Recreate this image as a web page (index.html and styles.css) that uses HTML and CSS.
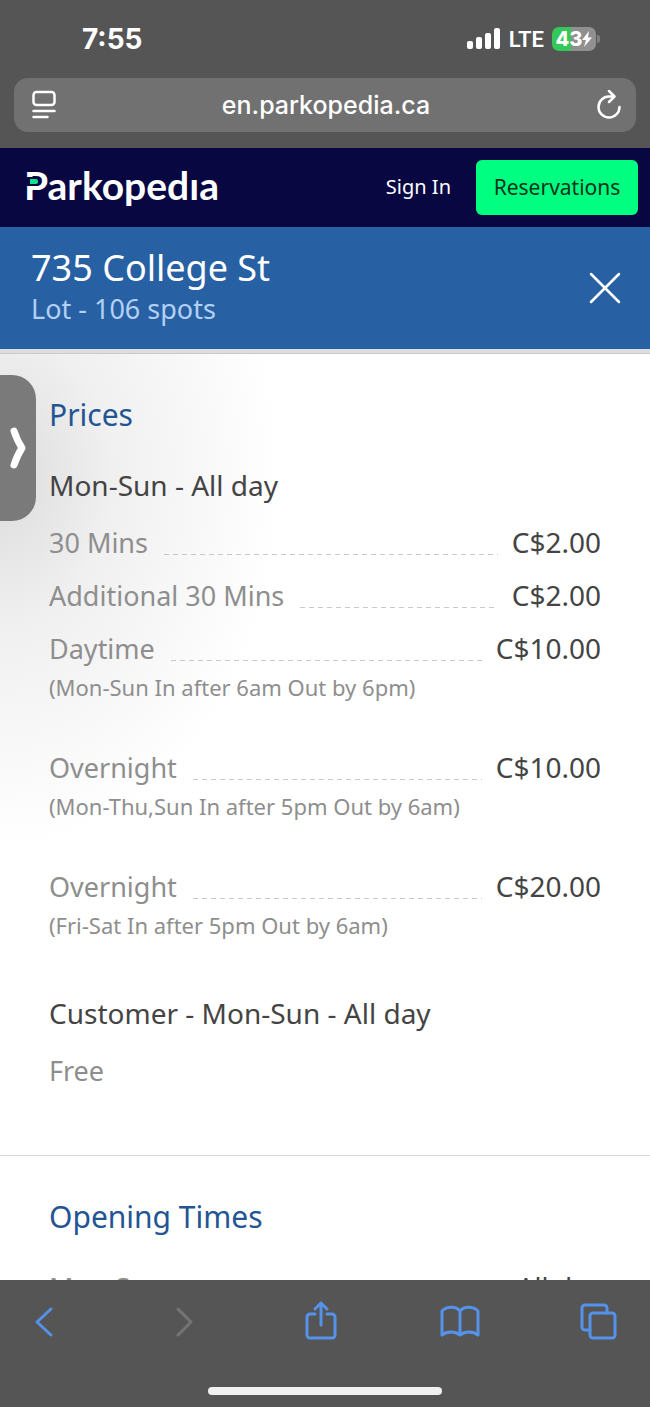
FILE: index.html
```
<!DOCTYPE html>
<html lang="en">
<head>
  <meta charset="UTF-8" />
  <meta name="viewport" content="width=device-width, initial-scale=1" />
  <title>735 College St - Parkopedia</title>
  <link rel="stylesheet" href="styles.css">
</head>
<body>
  <header class="browser-top">
    <div class="status-bar">
      <span class="time">7:55</span>
      <div class="status-right">
        <svg class="signal" width="34" height="22" viewBox="0 0 34 22" fill="#fff">
          <rect x="0" y="13" width="6" height="8" rx="2" />
          <rect x="9" y="9" width="6" height="12" rx="2" />
          <rect x="18" y="5" width="6" height="16" rx="2" />
          <rect x="27" y="0" width="6" height="21" rx="2" />
        </svg>
        <span class="network">LTE</span>
        <div class="battery">
          <span>43</span>
          <svg width="10" height="16" viewBox="0 0 10 16" fill="#fff"><path d="M7 0 0 9h4L2 16l8-9.500H6z" /></svg>
        </div>
      </div>
    </div>
    <div class="address-bar">
      <button class="icon-btn" aria-label="Page menu">
        <svg width="24" height="30" viewBox="0 0 24 30" fill="none" stroke="#fff" stroke-width="2.500" stroke-linecap="round">
          <rect x="1.500" y="2" width="21" height="13" rx="3" />
          <path d="M1.500 21h21M1.500 27h14" />
        </svg>
      </button>
      <span class="url">en.parkopedia.ca</span>
      <button class="icon-btn" aria-label="Reload">
        <svg width="26" height="30" viewBox="0 0 26 30" fill="none" stroke="#fff" stroke-width="2.500" stroke-linecap="round" stroke-linejoin="round">
          <path d="M17 6.500H13a10.500 10.500 0 1 0 10.500 10.500M13 1l5.500 5.500-5.500 5.500" />
        </svg>
      </button>
    </div>
  </header>

  <nav class="site-nav">
    <a class="logo" href="#">Parkopedıa</a>
    <a class="sign-in" href="#">Sign In</a>
    <button class="reservations">Reservations</button>
  </nav>

  <div class="lot-header">
    <div>
      <h1>735 College St</h1>
      <p>Lot - 106 spots</p>
    </div>
    <button class="icon-btn" aria-label="Close">
      <svg width="32" height="32" viewBox="0 0 32 32" stroke="#fff" stroke-width="2.500" stroke-linecap="round">
        <path d="M2 2l28 28M30 2 2 30" />
      </svg>
    </button>
  </div>

  <main>
    <button class="handle" aria-label="Open side panel">
      <svg width="18" height="44" viewBox="0 0 18 44" fill="none" stroke="#fff" stroke-width="7" stroke-linecap="round" stroke-linejoin="round">
        <path d="M5 5c2 6 4 11 8 17-4 6-6 11-8 17" />
      </svg>
    </button>

    <section>
      <h2>Prices</h2>
      <h3>Mon-Sun - All day</h3>
      <ul>
        <li>
          <div class="row"><span>30 Mins</span><i class="leader"></i><span class="price">C$2.00</span></div>
        </li>
        <li>
          <div class="row"><span>Additional 30 Mins</span><i class="leader"></i><span class="price">C$2.00</span></div>
        </li>
        <li>
          <div class="row"><span>Daytime</span><i class="leader"></i><span class="price">C$10.00</span></div>
          <p class="note">(Mon-Sun In after 6am Out by 6pm)</p>
        </li>
        <li>
          <div class="row"><span>Overnight</span><i class="leader"></i><span class="price">C$10.00</span></div>
          <p class="note">(Mon-Thu,Sun In after 5pm Out by 6am)</p>
        </li>
        <li>
          <div class="row"><span>Overnight</span><i class="leader"></i><span class="price">C$20.00</span></div>
          <p class="note">(Fri-Sat In after 5pm Out by 6am)</p>
        </li>
      </ul>
      <h3>Customer - Mon-Sun - All day</h3>
      <ul>
        <li>
          <div class="row"><span>Free</span></div>
        </li>
      </ul>
    </section>

    <section>
      <h2>Opening Times</h2>
      <div class="row"><span>Mon-Sun</span><span class="hours">All day</span></div>
    </section>
  </main>

  <footer class="browser-bottom">
    <div class="toolbar">
      <button class="icon-btn" aria-label="Back">
        <svg width="20" height="40" viewBox="0 0 20 40" stroke-width="4"><path d="M17 9 3 22l14 13" /></svg>
      </button>
      <button class="icon-btn forward" aria-label="Forward" disabled>
        <svg width="20" height="40" viewBox="0 0 20 40" stroke-width="3"><path d="M5 9l13 13L5 35" /></svg>
      </button>
      <button class="icon-btn" aria-label="Share">
        <svg width="34" height="40" viewBox="0 0 34 40"><path d="M11 14H6a3 3 0 0 0-3 3v18a3 3 0 0 0 3 3h22a3 3 0 0 0 3-3V17a3 3 0 0 0-3-3h-5M17 25V3M11 9l6-6 6 6" /></svg>
      </button>
      <button class="icon-btn" aria-label="Bookmarks">
        <svg width="40" height="40" viewBox="0 0 40 40"><path d="M20 11C16 6 7 6 2 11v24c5-4 13-4 18 0 5-4 13-4 18 0V11C33 6 24 6 20 11v24" /></svg>
      </button>
      <button class="icon-btn" aria-label="Tabs">
        <svg width="38" height="40" viewBox="0 0 38 40"><rect x="11" y="13" width="25" height="25" rx="3" /><path d="M11 30H6a3 3 0 0 1-3-3V8a3 3 0 0 1 3-3h19a3 3 0 0 1 3 3v5" /></svg>
      </button>
    </div>
    <div class="home-bar"></div>
  </footer>
</body>
</html>
```
FILE: styles.css
```
* {
  box-sizing: border-box;
}

body {
  display: flex;
  flex-direction: column;
  height: 100vh;
  margin: 0;
  overflow: hidden;
  background: #fff;
  color: #444;
  font-family: "Noto Sans", "Open Sans", sans-serif;
  font-size: 27px;
}

h1, h2, h3, p, ul {
  margin: 0;
  padding: 0;
  font-weight: 400;
}

ul {
  list-style: none;
}

a {
  color: #fff;
  text-decoration: none;
}

button {
  border: none;
  padding: 0;
  font-family: inherit;
  cursor: pointer;
}

svg {
  display: block;
}

.icon-btn {
  background: none;
}

/* browser chrome */
.browser-top {
  flex: none;
  padding: 0 14px 16px;
  background: #555;
  color: #fff;
  font-family: Inter, sans-serif;
}

.status-bar {
  display: flex;
  align-items: center;
  justify-content: space-between;
  height: 78px;
  padding: 0 36px 0 68px;
}

.time {
  font-size: 28px;
  font-weight: 700;
}

.status-right {
  display: flex;
  align-items: center;
  gap: 8px;
}

.network {
  font-family: Roboto, sans-serif;
  font-size: 22px;
  font-weight: 600;
}

.battery {
  position: relative;
  display: flex;
  align-items: center;
  justify-content: center;
  width: 44px;
  height: 24px;
  margin-right: 4px;
  border-radius: 7px;
  background: linear-gradient(to right, #34c759 44%, #909090 44%);
  font-size: 20px;
  font-weight: 800;
}

.battery::after {
  content: "";
  position: absolute;
  right: -4px;
  width: 3px;
  height: 8px;
  border-radius: 0 3px 3px 0;
  background: #808080;
}

.address-bar {
  display: flex;
  align-items: center;
  justify-content: space-between;
  height: 54px;
  padding: 0 14px 0 18px;
  border-radius: 14px;
  background: #717171;
}

.url {
  font-size: 25px;
  font-weight: 500;
}

/* site header */
.site-nav {
  display: flex;
  flex: none;
  align-items: center;
  height: 79px;
  padding: 0 12px 0 24px;
  background: #080742;
}

.logo {
  position: relative;
  margin-right: auto;
  padding-bottom: 6px;
  font-family: Lato, sans-serif;
  font-size: 39px;
  font-weight: 700;
  line-height: 46px;
}

/* green light inside the P */
.logo::before {
  content: "";
  position: absolute;
  top: 15px;
  left: 0;
  width: 8px;
  height: 5px;
  border: solid #080742;
  border-width: 2px 2px 2px 6px;
  border-radius: 0 4px 4px 0;
  background: #14e08a;
}

.sign-in {
  margin-right: 25px;
  padding-bottom: 2px;
  font-size: 20px;
}

.reservations {
  width: 162px;
  height: 55px;
  padding-bottom: 2px;
  border-radius: 6px;
  background: #00ff80;
  color: #08331c;
  font-size: 21px;
}

.lot-header {
  z-index: 1;
  display: flex;
  flex: none;
  align-items: center;
  justify-content: space-between;
  height: 122px;
  padding: 0 29px 0 31px;
  background: #2861a3;
  box-shadow: 0 4px 0 #dedede, 0 5px 0 #c9c9c9;
}

.lot-header h1 {
  color: #fff;
  font-size: 36px;
  line-height: 42px;
}

.lot-header p {
  color: #b3d0f5;
  line-height: 40px;
}

/* lot details */
main {
  position: relative;
  flex: 1;
  min-height: 0;
  padding-top: 5px;
  overflow: hidden;
  background: radial-gradient(280px 370px at 0 130px, #dcdcdc, #f0f0f0 40%, #fff);
}

.handle {
  position: absolute;
  top: 26px;
  left: 0;
  width: 36px;
  height: 146px;
  padding-left: 9px;
  border-radius: 0 24px 24px 0;
  background: #7a7a7a;
}

section {
  padding: 34px 49px 58px;
}

section + section {
  border-top: 1px solid #d8d8d8;
}

h2 {
  margin-bottom: 18px;
  color: #235593;
  font-size: 30px;
  line-height: 53px;
}

h3 {
  margin-bottom: 4px;
  font-size: 28px;
  line-height: 53px;
}

ul + h3 {
  margin-top: 50px;
}

.row {
  display: flex;
  justify-content: space-between;
  color: #8e8e8e;
  line-height: 53px;
}

.leader {
  flex: 1;
  align-self: flex-end;
  height: 1px;
  margin: 0 14px 14px 16px;
  background: repeating-linear-gradient(to right, #c8c8c8 0 5px, transparent 5px 9px);
}

.price {
  color: #444;
  font-size: 28px;
}

.hours {
  color: #444;
}

.note {
  color: #8e8e8e;
  font-size: 22px;
  line-height: 24px;
}

li:has(.note) + li {
  margin-top: 42px;
}

.browser-bottom {
  z-index: 1;
  flex: none;
  height: 127px;
  padding-top: 20px;
  background: #555;
}

.toolbar {
  display: flex;
  align-items: center;
  justify-content: space-between;
  padding: 0 32px 0 24px;
}

.toolbar .icon-btn {
  display: flex;
  justify-content: center;
  width: 40px;
}

.toolbar svg {
  flex: none;
  fill: none;
  stroke: #5593ea;
  stroke-width: 3;
  stroke-linecap: round;
  stroke-linejoin: round;
}

.toolbar .forward svg {
  stroke: #747474;
}

.home-bar {
  width: 36%;
  height: 8px;
  margin: 47px auto 0;
  border-radius: 4px;
  background: #f0f0f0;
}
```
